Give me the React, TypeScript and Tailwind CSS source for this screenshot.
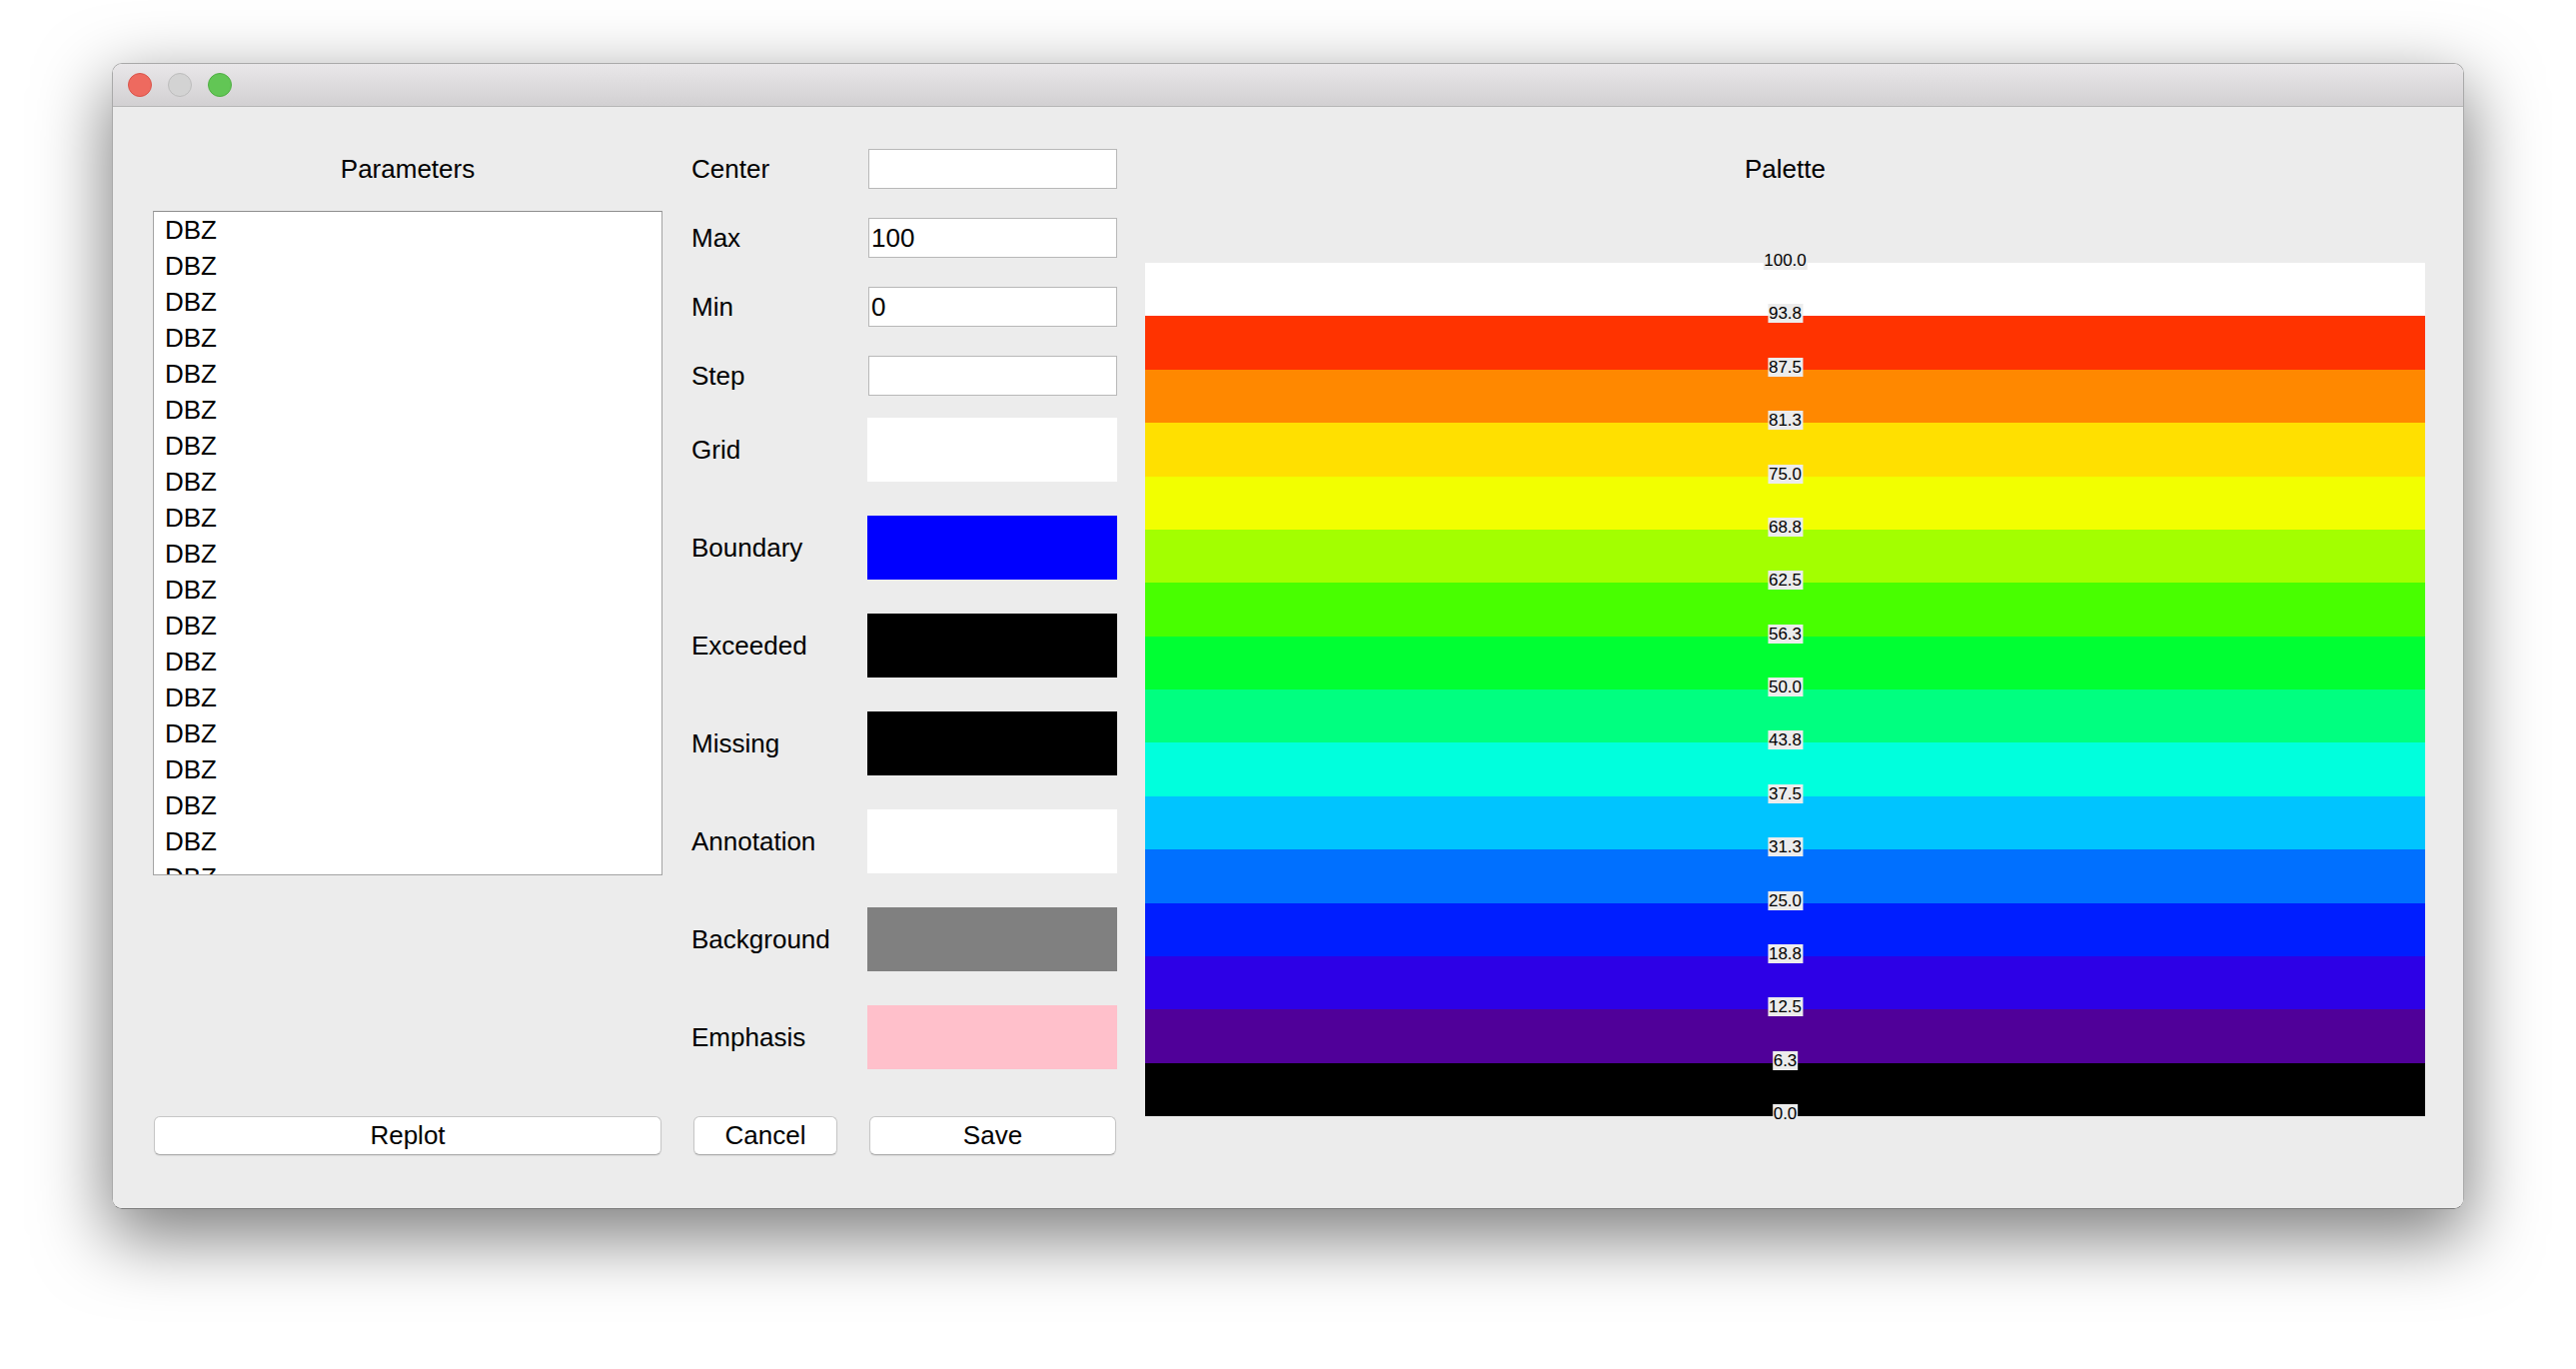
import React from "react";

const params = Array.from({ length: 19 }, () => "DBZ");

const fields = [
  { label: "Center", value: "" },
  { label: "Max", value: "100" },
  { label: "Min", value: "0" },
  { label: "Step", value: "" },
];

const swatches = [
  { label: "Grid", color: "bg-white" },
  { label: "Boundary", color: "bg-[#0000ff]" },
  { label: "Exceeded", color: "bg-black" },
  { label: "Missing", color: "bg-black" },
  { label: "Annotation", color: "bg-white" },
  { label: "Background", color: "bg-[#808080]" },
  { label: "Emphasis", color: "bg-[#ffc0cb]" },
];

// top to bottom, label is the value at the band's upper edge
const bands = [
  { color: "bg-white", label: "100.0" },
  { color: "bg-[#ff3300]", label: "93.8" },
  { color: "bg-[#ff8800]", label: "87.5" },
  { color: "bg-[#ffe000]", label: "81.3" },
  { color: "bg-[#f2ff00]", label: "75.0" },
  { color: "bg-[#a3ff00]", label: "68.8" },
  { color: "bg-[#48ff00]", label: "62.5" },
  { color: "bg-[#00ff33]", label: "56.3" },
  { color: "bg-[#00ff80]", label: "50.0" },
  { color: "bg-[#00ffdd]", label: "43.8" },
  { color: "bg-[#00c4ff]", label: "37.5" },
  { color: "bg-[#0070ff]", label: "31.3" },
  { color: "bg-[#001eff]", label: "25.0" },
  { color: "bg-[#2d00e6]", label: "18.8" },
  { color: "bg-[#500099]", label: "12.5" },
  { color: "bg-black", label: "6.3" },
];

const Tick = ({ text, bottom }: { text: string; bottom?: boolean }) => (
  <span
    className={`absolute left-1/2 z-10 -translate-x-1/2 bg-[#ececec] px-[1px] text-[17px] leading-[19px] text-black ${
      bottom ? "-bottom-[7px]" : "-top-[12px]"
    }`}
  >
    {text}
  </span>
);

const Button = ({ children, className = "" }: { children: React.ReactNode; className?: string }) => (
  <button
    className={`h-[39px] rounded-[6px] border border-[#c6c6c6] border-b-[#acacac] bg-white text-[26px] leading-[37px] text-black shadow-[0_1px_1px_rgba(0,0,0,0.08)] ${className}`}
  >
    {children}
  </button>
);

const App = () => {
  return (
    <div className="h-[1370px] w-[2578px] bg-white pl-[112px] pt-[63px] font-['Liberation_Sans',Arial,sans-serif] text-black">
      <div className="flex h-[1147px] w-[2354px] flex-col overflow-hidden rounded-[10px] border border-[#a9a9a9] border-b-[#7c7c7c] shadow-[0_25px_70px_4px_rgba(0,0,0,0.5)]">
        {/* title bar */}
        <div className="flex h-[43px] shrink-0 items-center gap-[16px] border-b border-[#b6b6b6] bg-gradient-to-b from-[#e9e7e9] to-[#d2d0d2] pl-[15px]">
          <div className="h-[24px] w-[24px] rounded-full border border-[#d9534a] bg-[#ee6a5f]" />
          <div className="h-[24px] w-[24px] rounded-full border border-[#bcbcbc] bg-[#d3d3d3]" />
          <div className="h-[24px] w-[24px] rounded-full border border-[#4fae42] bg-[#62c655]" />
        </div>

        <div className="flex flex-1 bg-[#ececec] pb-[53px] pl-[40px] pr-[38px] pt-[42px] text-[26px]">
          {/* parameters */}
          <div className="flex w-[510px] flex-col">
            <div className="h-[40px] text-center leading-[40px]">Parameters</div>
            <div className="mt-[22px] h-[665px] overflow-hidden border border-[#a3a3a3] border-t-[#8e8e8e] bg-white pl-[11px]">
              {params.map((p, i) => (
                <div key={i} className="h-[36px] leading-[36px]">
                  {p}
                </div>
              ))}
            </div>
            <Button className="mx-[1px] mt-auto">Replot</Button>
          </div>

          {/* form */}
          <div className="ml-[29px] flex w-[426px] flex-col">
            <div className="flex flex-col gap-[29px]">
              {fields.map((f) => (
                <div key={f.label} className="flex h-[40px] items-center">
                  <span className="w-[177px] leading-[40px]">{f.label}</span>
                  <div className="h-[40px] w-[249px] border border-[#b8b8b8] bg-white pl-[2px] leading-[38px]">
                    {f.value}
                  </div>
                </div>
              ))}
            </div>
            <div className="mt-[22px] flex flex-col gap-[34px]">
              {swatches.map((s) => (
                <div key={s.label} className="flex h-[64px] items-center">
                  <span className="w-[176px]">{s.label}</span>
                  <div className={`h-[64px] w-[250px] ${s.color}`} />
                </div>
              ))}
            </div>
            <div className="mt-auto flex">
              <Button className="ml-[2px] w-[144px]">Cancel</Button>
              <Button className="ml-auto mr-[1px] w-[247px]">Save</Button>
            </div>
          </div>

          {/* palette */}
          <div className="ml-[28px] flex flex-1 flex-col">
            <div className="h-[40px] text-center leading-[40px]">Palette</div>
            <div className="mt-[74px] flex h-[854px] flex-col">
              {bands.map((b, i) => (
                <div key={b.label} className={`relative flex-1 ${b.color}`}>
                  <Tick text={b.label} />
                  {i === bands.length - 1 && <Tick text="0.0" bottom />}
                </div>
              ))}
            </div>
          </div>
        </div>
      </div>
    </div>
  );
};

export default App;
